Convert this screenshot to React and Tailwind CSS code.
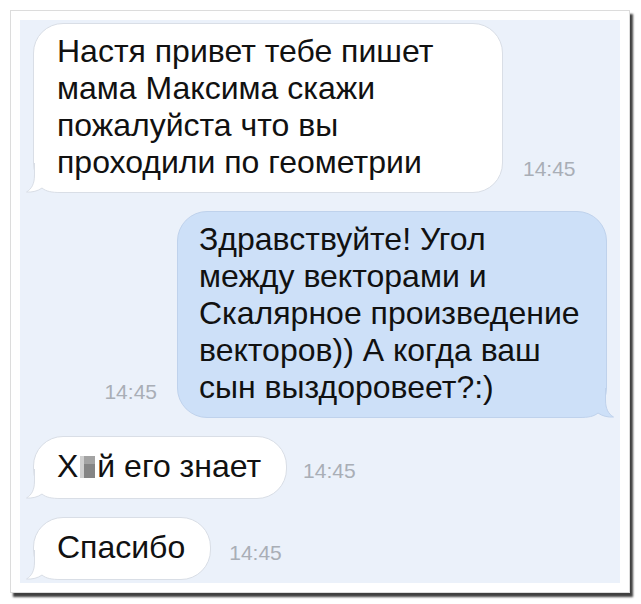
import React from 'react';

const font = { fontFamily: '"Liberation Sans", Arial, sans-serif' };

// Little curled tail drawn at the bottom corner of a bubble
function Tail({ side, fill, stroke }) {
  const left = side === 'left';
  return (
    <svg
      width="40"
      height="30"
      viewBox="0 0 40 30"
      className={left ? 'absolute -left-[8px] -bottom-[1px]' : 'absolute -right-[8px] -bottom-[1px] -scale-x-100'}
    >
      <path
        d="M8.5,0 L8.5,12 C8.5,21 5.5,26 0.5,29 C6,29.5 12,28 16,25 C20,28.5 26,29.5 34,29.5 L40,29.5 L40,0 Z"
        fill={fill}
      />
      <path
        d="M8.5,0 L8.5,12 C8.5,21 5.5,26 0.5,29 C6,29.5 12,28 16,25 C20,28.5 26,29.5 34,29.5 L40,29.5"
        fill="none"
        stroke={stroke}
        strokeWidth="1"
      />
    </svg>
  );
}

function Bubble({ out, className = '', children }) {
  const fill = out ? '#cde0f8' : '#ffffff';
  const stroke = out ? '#bfd2ec' : '#d9dee6';
  return (
    <div
      className={`relative rounded-[30px] border text-[32px] leading-[37px] text-[#111] ${
        out ? 'border-[#bfd2ec] bg-[#cde0f8] pl-[21px]' : 'border-[#d9dee6] bg-white pl-[23px]'
      } ${className}`}
    >
      <Tail side={out ? 'right' : 'left'} fill={fill} stroke={stroke} />
      <div className="relative z-10">{children}</div>
    </div>
  );
}

function Time({ className = 'mb-[16px]' }) {
  return <span className={`${className} text-[21px] leading-none text-[#a9aeb6]`}>14:45</span>;
}

function Line({ children }) {
  return <div className="whitespace-nowrap">{children}</div>;
}

// pixelated patch over the hidden letter
function Censor() {
  return (
    <span className="mx-[2px] inline-flex h-[22px] w-[15px] align-[-1px]">
      <span className="h-full w-[4px] bg-[#cfcfcf]" />
      <span className="flex h-full flex-1 flex-col">
        <span className="h-[8px] bg-[#a3a3a3]" />
        <span className="flex-1 bg-[#858585]" />
      </span>
    </span>
  );
}

export default function App() {
  return (
    <div className="h-[604px] w-[641px] bg-white p-[10px]" style={font}>
      <div className="h-[583px] w-[620px] border border-[#dcdcdc] bg-white p-[9px] shadow-[3px_4px_2px_rgba(0,0,0,0.75)]">
        <div className="flex h-full flex-col gap-[18px] bg-[#ebf1fa] px-[13px] pt-[3px]">
          <div className="flex items-end gap-[20px]">
            <Bubble className="w-[470px] pt-[9px] pb-[11px]">
              <Line>Настя привет тебе пишет</Line>
              <Line>мама Максима скажи</Line>
              <Line>пожалуйста что вы</Line>
              <Line>проходили по геометрии</Line>
            </Bubble>
            <Time className="mb-[14px]" />
          </div>

          <div className="flex items-end justify-end gap-[20px]">
            <Time />
            <Bubble out className="w-[430px] pt-[9px] pb-[11px]">
              <Line>Здравствуйте! Угол</Line>
              <Line>между векторами и</Line>
              <Line>Скалярное произведение</Line>
              <Line>векторов)) А когда ваш</Line>
              <Line>сын выздоровеет?:)</Line>
            </Bubble>
          </div>

          <div className="flex items-end gap-[16px]">
            <Bubble className="pt-[11px] pb-[13px] pr-[25px]">
              <Line>
                Х<Censor />й его знает
              </Line>
            </Bubble>
            <Time className="mb-[18px]" />
          </div>

          <div className="flex items-end gap-[18px]">
            <Bubble className="pt-[11px] pb-[13px] pr-[25px]">
              <Line>Спасибо</Line>
            </Bubble>
            <Time className="mb-[17px]" />
          </div>
        </div>
      </div>
    </div>
  );
}
